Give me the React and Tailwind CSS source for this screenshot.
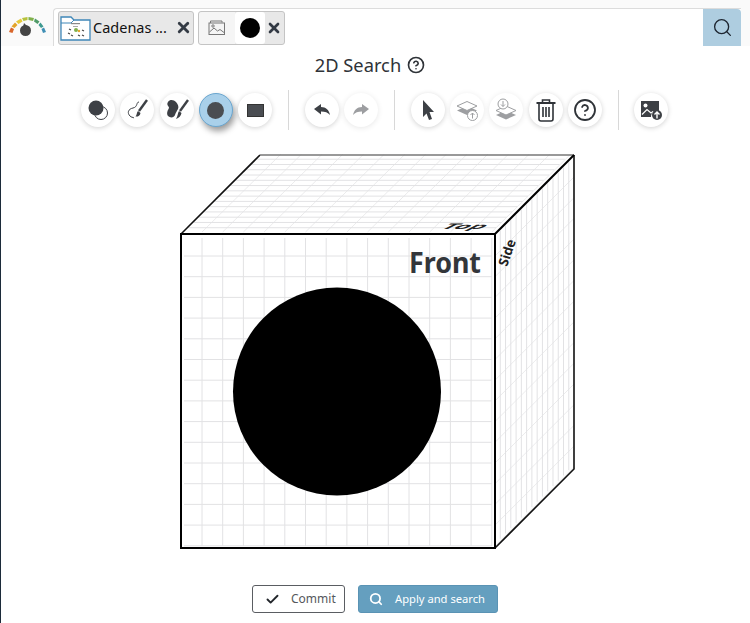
import { Check, CircleHelp, Search, X } from 'lucide-react';

const FONT = "font-['Noto_Sans',sans-serif]";

function Gauge() {
  const segs = [
    ['#d9662b', 'M9 32 L11 27.5 L14 29 L12.5 33'],
    ['#e3a32a', 'M11.5 26.5 L15 22.5 L17.5 25 L14.5 28'],
    ['#e6c93a', 'M16 21.5 L21 18.5 L22.5 21.5 L18.5 24'],
    ['#b6c23c', 'M22 18 L27.5 17 L27.5 20 L23.5 21'],
    ['#7fb04a', 'M28.5 17 L34 18 L33 21 L28.5 20'],
    ['#4f9a68', 'M35 18.5 L39.5 21.5 L37.5 24 L34 21.5'],
    ['#3f9a90', 'M40.5 22.5 L43.5 26.5 L41 28 L38.5 25'],
    ['#3f8fb5', 'M44 27.5 L46 32 L43 33 L41.5 29'],
  ];
  return (
    <svg width="44" height="46" viewBox="8 0 44 46" className="shrink-0">
      {segs.map(([c, d]) => <path key={c} d={d} fill={c} />)}
      <circle cx="25.5" cy="30.5" r="5.5" fill="#444" />
      <path d="M24 23 L27 26 L23 27 Z" fill="#444" />
    </svg>
  );
}

function FolderThumb() {
  return (
    <svg width="32" height="26" viewBox="0 0 32 26" className="shrink-0">
      <path d="M1 2 H11 L14 5 H30 V25 H1 Z" fill="#fff" stroke="#3f87b8" strokeWidth="1.3" />
      <path d="M1 8 H11 L14 5" fill="none" stroke="#3f87b8" strokeWidth="1" />
      <rect x="11" y="8" width="9" height="1.2" fill="#888" />
      <rect x="13" y="11" width="5" height="1" fill="#aaa" />
      <circle cx="16" cy="15" r="2" fill="#7fb04a" />
      <circle cx="19" cy="16" r="1.2" fill="#e3a32a" />
      <path d="M9 14 l2 1 M8 18 l2 1 M11 20 l2 1 M18 20 l2 1 M22 20 l2 1 M22 15 l2 1" stroke="#444" strokeWidth="1.2" />
    </svg>
  );
}

function ToolButton({ children, active, dim }) {
  return (
    <button
      className={`w-[34px] h-[34px] rounded-full flex items-center justify-center shrink-0 ${
        active
          ? 'bg-[#a9d0ea] border border-[#6aa6cf] shadow-[2px_4px_6px_rgba(0,0,0,0.4)]'
          : 'bg-white shadow-[0_1px_5px_rgba(0,0,0,0.18)]'
      } ${dim ? 'opacity-50' : ''}`}
    >
      {children}
    </button>
  );
}

function Divider() {
  return <div className="w-px h-[40px] bg-[#d8d8d8] shrink-0 mx-[10.5px]" />;
}

const ink = '#3d4045';

function Cube() {
  const lines = [];
  for (let i = 0; i < 15; i++) {
    const x = 23 + i * 20.7;
    lines.push(<path key={`fv${i}`} d={`M${x} 84 V392`} />);
    lines.push(<path key={`td${i}`} d={`M${x} 78 L${x + 79} 0`} opacity="0.7" />);
    const y = 102 + i * 20.7;
    lines.push(<path key={`fh${i}`} d={`M5 ${y} H313`} />);
    lines.push(<path key={`sd${i}`} d={`M316 ${y} L395 ${y - 79}`} opacity="0.7" />);
    const t = 5.27 * (i + 1);
    if (i < 14) {
      lines.push(<path key={`th${i}`} d={`M${t + 4} ${79 - t} H${t + 312}`} />);
      lines.push(<path key={`sv${i}`} d={`M${316 + t} ${79 - t + 3} V${393 - t - 3}`} />);
    }
  }
  return (
    <svg width="396" height="396" viewBox="0 0 396 396" className="ml-[178px] mt-[24px] shrink-0 block">
      <g stroke="#e2e2e4" strokeWidth="1" fill="none">{lines}</g>
      <circle cx="158" cy="237.5" r="104" fill="#000" />
      <path d="M2 80 L81 1" fill="none" stroke="#111" strokeWidth="1.6" />
      <path d="M395 1 V315 L316 394" fill="none" stroke="#111" strokeWidth="1.6" />
      <path d="M81 1 H395" fill="none" stroke="#777" strokeWidth="1.4" />
      <rect x="2" y="80" width="314" height="314" fill="none" stroke="#000" strokeWidth="2" />
      <path d="M316 80 L395 1" stroke="#000" strokeWidth="2" />
      <text x="230" y="119" fontFamily="Noto Sans" fontWeight="700" fontSize="29" fill="#33363a" textLength="72" lengthAdjust="spacingAndGlyphs">Front</text>
      <text transform="matrix(1.85 0 -1.2 0.6 260 75)" fontFamily="Noto Sans" fontWeight="700" fontSize="13" fill="#222">Top</text>
      <text transform="matrix(0.35 -1 0.85 0.25 328 113)" fontFamily="Noto Sans" fontWeight="700" fontSize="15" fill="#222" textLength="26" lengthAdjust="spacingAndGlyphs">Side</text>
    </svg>
  );
}

export default function App() {
  return (
    <div className={`w-[750px] h-[623px] overflow-hidden bg-white border-l border-[#1c2b3a] flex flex-col ${FONT}`}>
      <div className="h-[46px] bg-[#fafafa] flex items-start shrink-0 pl-[7px] pr-[9px]">
        <Gauge />
        <div className="ml-[1px] mt-[8px] flex-1 h-[38px] bg-white border-t border-l border-[#dcdcdc] rounded-tl flex items-center pl-[4px] relative">
          <div className="w-[136px] h-[34px] bg-[#e8e8e8] border border-[#c4c4c4] rounded-[3px] flex items-center pl-[1px] shrink-0">
            <FolderThumb />
            <span className="ml-[1px] text-[14.5px] text-[#111] whitespace-nowrap">Cadenas ...</span>
            <X size={17} strokeWidth={4} className="text-[#333a44] ml-auto mr-[1px] shrink-0" />
          </div>
          <div className="ml-[4px] w-[87px] h-[34px] bg-[#e8e8e8] border border-[#c4c4c4] rounded-[3px] flex items-center shrink-0">
            <div className="w-[36px] h-[32px] bg-[#f5f5f5] rounded-l-[3px] flex items-center justify-center">
              <svg width="18" height="16" viewBox="0 0 18 16" fill="none" stroke="#777" strokeWidth="1">
                <path d="M2.5 3 L2.5 1 H14 V2.5" />
                <rect x="1" y="3" width="15.5" height="11.5" />
                <path d="M1.5 12 L6 8 L9.5 11 L12 9.5 L16 12.5" />
                <circle cx="5" cy="6" r="1.2" />
              </svg>
            </div>
            <div className="w-[30px] h-[32px] bg-white rounded-[3px] flex items-center justify-center">
              <div className="w-[20px] h-[20px] rounded-full bg-black" />
            </div>
            <X size={16} strokeWidth={4} className="text-[#333a44] ml-[1px] shrink-0" />
          </div>
          <div className="ml-auto w-[38px] h-[37px] bg-[#aecde0] rounded-tr flex items-center justify-center">
            <Search size={21} strokeWidth={1.5} className="text-[#1d2530]" />
          </div>
        </div>
      </div>

      <div className="h-[38px] flex items-center justify-center gap-[6px] shrink-0 pr-[11px]">
        <span className="text-[18.3px] text-[#2f3338]">2D Search</span>
        <CircleHelp size={18} strokeWidth={2.2} className="text-[#2f3338]" />
      </div>

      <div className="h-[40px] mt-[6px] flex items-center pl-[80px] gap-[5.3px] shrink-0">
        <ToolButton>
          <svg width="22" height="22" viewBox="0 0 22 22">
            <circle cx="14" cy="14" r="6.5" fill="#fff" stroke={ink} strokeWidth="1" />
            <circle cx="9" cy="9" r="7.5" fill={ink} />
          </svg>
        </ToolButton>
        <ToolButton>
          <svg width="24" height="24" viewBox="0 0 24 24" fill="none">
            <path d="M14 4 C11 4 13 9 8 10 C3 11 2 15 5 18 C6 19.5 8 19 9 20" stroke={ink} strokeWidth="1" />
            <path d="M22 2 L14 13" stroke={ink} strokeWidth="2.4" />
            <path d="M13 13 L15.5 15 C15 18 12.5 19 10.5 18.5 C12 17 11.5 14.5 13 13 Z" fill={ink} />
          </svg>
        </ToolButton>
        <ToolButton>
          <svg width="24" height="24" viewBox="0 0 24 24">
            <path d="M3 4 C5 1 9 2 11 4 C13 6 14 9 13 11 C12 13 11 14 10 17 C9 20 5 20 3 18 C1 15 3 12 4 10 C4 8 1 7 3 4 Z" fill={ink} />
            <path d="M23 2 L15 13" stroke={ink} strokeWidth="2.4" />
            <path d="M14 13 L16.5 15 C16 18 14 20 11 21 C13 18 12.5 15 14 13 Z" fill={ink} />
          </svg>
        </ToolButton>
        <ToolButton active>
          <div className="w-[17px] h-[17px] rounded-full bg-[#4a4d52]" />
        </ToolButton>
        <ToolButton>
          <div className="w-[17px] h-[13px] bg-[#4a4d52] border border-[#333]" />
        </ToolButton>

        <Divider />

        <ToolButton>
          <svg width="18" height="14" viewBox="0 0 18 14">
            <path d="M1 6 L8 1 V4 C13 4 16 7 17 12 C15 9.5 12 8.5 8 8.5 V11.5 Z" fill={ink} />
          </svg>
        </ToolButton>
        <ToolButton dim>
          <svg width="18" height="14" viewBox="0 0 18 14">
            <path d="M17 6 L10 1 V4 C5 4 2 7 1 12 C3 9.5 6 8.5 10 8.5 V11.5 Z" fill={ink} />
          </svg>
        </ToolButton>

        <Divider />

        <ToolButton>
          <svg width="14" height="22" viewBox="0 0 14 22">
            <path d="M2 1 L13 13 H8.5 L11 20 L8 21 L5.5 14.5 L2 18 Z" fill={ink} />
          </svg>
        </ToolButton>
        <ToolButton dim>
          <svg width="24" height="24" viewBox="0 0 24 24">
            <path d="M2 12.5 L12 8 L22 12.5 L12 17 Z" fill={ink} />
            <path d="M2 8 L12 3.5 L22 8 L12 12.5 Z" fill="#fff" stroke={ink} strokeWidth="1" />
            <circle cx="17.5" cy="17.5" r="5" fill="#fff" stroke={ink} strokeWidth="1" />
            <path d="M17.5 20.5 V15 M15.5 17 L17.5 15 L19.5 17" fill="none" stroke={ink} strokeWidth="1" />
          </svg>
        </ToolButton>
        <ToolButton dim>
          <svg width="24" height="24" viewBox="0 0 24 24">
            <path d="M2 17 L12 12.5 L22 17 L12 21.5 Z" fill={ink} />
            <path d="M2 12.5 L12 8 L22 12.5 L12 17 Z" fill="#fff" stroke={ink} strokeWidth="1" />
            <circle cx="9" cy="6" r="5" fill="#fff" stroke={ink} strokeWidth="1" />
            <path d="M9 3 V8.5 M7 6.5 L9 8.5 L11 6.5" fill="none" stroke={ink} strokeWidth="1" />
          </svg>
        </ToolButton>
        <ToolButton>
          <svg width="22" height="24" viewBox="0 0 22 24" fill="none" stroke="#2f3338" strokeWidth="1.6">
            <path d="M1.5 5 H20.5" strokeWidth="2" />
            <path d="M7.5 5 V2 H14.5 V5" />
            <path d="M4 5 V21 Q4 23 6 23 H16 Q18 23 18 21 V5" />
            <path d="M8 9 V19 M11 9 V19 M14 9 V19" />
          </svg>
        </ToolButton>
        <ToolButton>
          <CircleHelp size={24} strokeWidth={1.8} className="text-[#2f3338]" />
        </ToolButton>

        <Divider />

        <ToolButton>
          <svg width="24" height="22" viewBox="0 0 24 22">
            <path d="M2 2 H20 V12 A6 6 0 0 0 12 18 H2 Z" fill={ink} />
            <circle cx="6.5" cy="6.5" r="2" fill="#fff" />
            <path d="M3 15.5 L8 10.5 L12 14 L14 12.5" fill="none" stroke="#fff" strokeWidth="1.2" />
            <circle cx="18" cy="16" r="5" fill={ink} />
            <path d="M18 19.5 V13 M15.5 15.5 L18 13 L20.5 15.5" fill="none" stroke="#fff" strokeWidth="1.4" />
          </svg>
        </ToolButton>
      </div>

      <Cube />

      <div className="mt-[35px] flex items-start pl-[251px] gap-[13px] shrink-0">
        <button className="w-[93px] h-[28px] bg-white border border-[#5a5d62] rounded-[3px] flex items-center text-[12px] text-[#55585c]">
          <Check size={15} strokeWidth={3} className="ml-[12px] text-[#22262b]" />
          <span className="ml-[11px]">Commit</span>
        </button>
        <button className="w-[140px] h-[28px] bg-[#659fbf] border border-[#5a93b4] rounded-[3px] flex items-center text-[11.2px] text-white">
          <Search size={14} strokeWidth={3} className="ml-[10px]" />
          <span className="ml-[12px] whitespace-nowrap">Apply and search</span>
        </button>
      </div>
    </div>
  );
}
